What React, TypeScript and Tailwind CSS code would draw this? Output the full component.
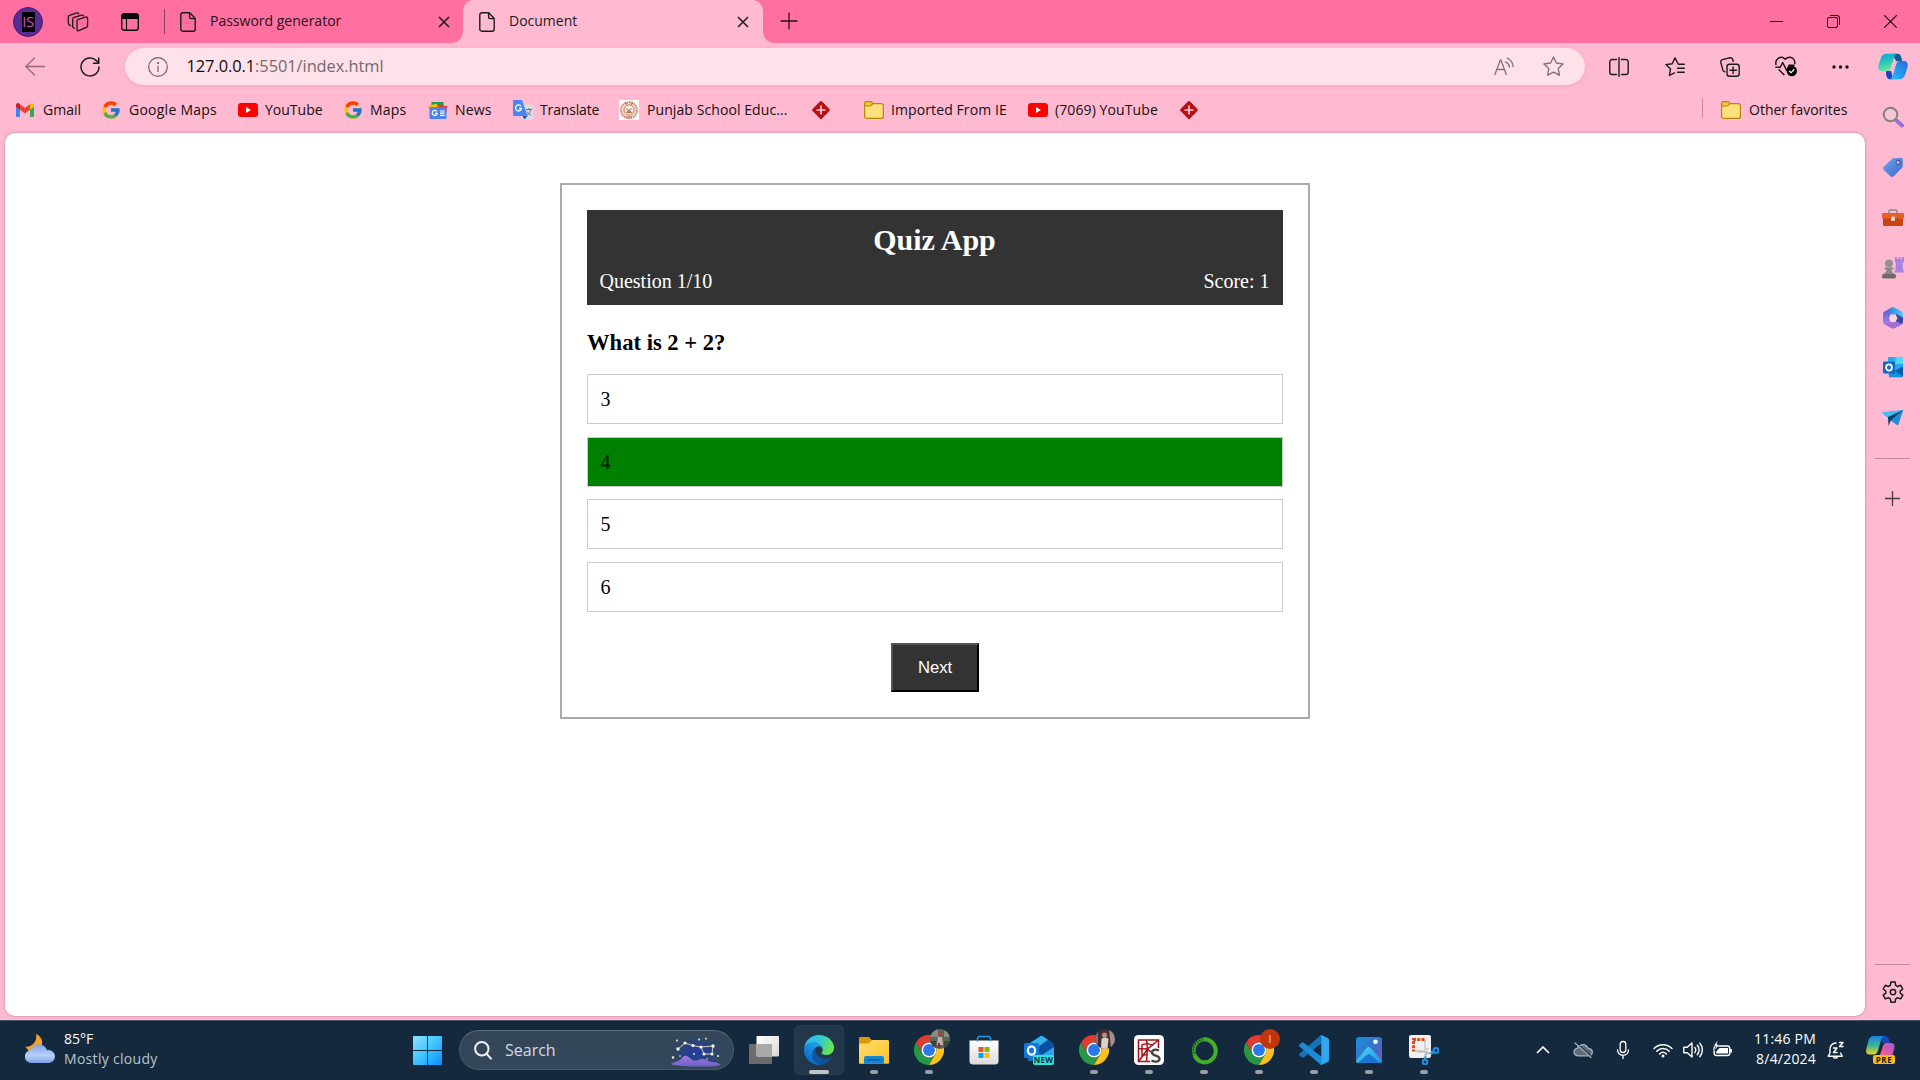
import React from 'react';
import { FcGoogle } from 'react-icons/fc';

/* ---------- shared pieces ---------- */

function Line({ className = '', children, w = 1.3 }: { className?: string; children: React.ReactNode; w?: number }) {
  return (
    <svg
      viewBox="0 0 20 20"
      className={'shrink-0 ' + className}
      fill="none"
      stroke="currentColor"
      strokeWidth={w}
      strokeLinecap="round"
      strokeLinejoin="round"
    >
      {children}
    </svg>
  );
}

const DocIcon = () => (
  <svg viewBox="0 0 16 20" className="h-5 w-4 shrink-0" fill="none" stroke="#1b1b1b" strokeWidth="1.4" strokeLinejoin="round">
    <path d="M2.8 .8h7l5.4 5.6v10.8a2 2 0 0 1-2 2H2.800a2 2 0 0 1-2-2V2.800a2 2 0 0 1 2-2z" />
    <path d="M9.600 1v4.200a1.400 1.400 0 0 0 1.400 1.400h4" />
  </svg>
);

const TabClose = () => (
  <svg viewBox="0 0 12 12" className="h-3 w-3 shrink-0" stroke="#1b1b1b" strokeWidth="1.500">
    <path d="M1 1l10 10M11 1L1 11" />
  </svg>
);

/* ---------- title bar ---------- */

function TitleBar() {
  return (
    <div className="flex h-[43px] w-full shrink-0 items-center bg-[#ff6fa0]">
      <div className="ml-[13px] flex h-[30px] w-[30px] items-center justify-center rounded-full border border-[#44206e] bg-[#5a2a96]">
        <div className="flex h-5 w-[13px] flex-col items-center justify-center bg-black text-[15px] leading-[17px] tracking-[-0.5px] text-[#d650c8]">
          IS
        </div>
      </div>
      <svg viewBox="0 0 22 20" className="ml-6 h-5 w-[22px]" fill="none" stroke="#1b1b1b" strokeWidth="1.300" strokeLinejoin="round" strokeLinecap="round">
        <path d="M11.300 7.300l7.500-2.200c1-.3 1.800.4 1.800 1.500v7c0 .8-.5 1.400-1.200 1.700l-7.600 3.400c-.9.3-1.800-.2-1.800-1.200V9.200c0-1 .4-1.600 1.300-1.900z" />
        <path d="M7.400 16.200l-1-.4c-.5-.3-.7-.8-.7-1.400V7.200c0-.9.4-1.500 1.300-1.800l7.600-2.300c.9-.2 1.600.1 2 .9" />
        <path d="M3.600 13.600l-1.300-.7c-.8-.5-1-1-1-1.800V5.200c0-.9.4-1.500 1.200-1.800L9.800.9c.9-.2 1.600 0 2 .8" />
      </svg>
      <svg viewBox="0 0 18 18" className="ml-8 h-[18px] w-[18px]" fill="none" stroke="#0b0b0b" strokeWidth="1.400">
        <rect x=".7" y=".7" width="16.600" height="16.600" rx="2.600" />
        <path d="M1 3.200A2.500 2.500 0 0 1 3.200 1h11.600A2.500 2.500 0 0 1 17 3.200v2H1z" fill="#0b0b0b" />
        <path d="M5.500 5v12" strokeWidth="1.100" />
      </svg>
      <div className="ml-[25px] h-[25px] w-px bg-[#8f3d5b]" />
      <div className="flex h-full w-[298px] items-center rounded-br-[11px] pl-[15px]">
        <DocIcon />
        <span className="ml-[14px] w-[228px] pb-[2px] text-[14px] text-[#2a0f18]">Password generator</span>
        <TabClose />
      </div>
      <div className="relative flex h-full w-[300px] items-center rounded-t-[11px] bg-[#ffbad2] pl-4">
        <div className="absolute bottom-0 -left-[11px] h-[11px] w-[11px] bg-[radial-gradient(circle_at_0_0,transparent_10.500px,#ffbad2_11px)]" />
        <div className="absolute -right-[11px] bottom-0 h-[11px] w-[11px] bg-[radial-gradient(circle_at_100%_0,transparent_10.500px,#ffbad2_11px)]" />
        <DocIcon />
        <span className="ml-[14px] w-[228px] pb-[2px] text-[14px] text-[#1b1b1b]">Document</span>
        <TabClose />
      </div>
      <svg viewBox="0 0 18 18" className="mb-px ml-[17px] h-[18px] w-[18px]" stroke="#2a0f18" strokeWidth="1.300">
        <path d="M9 .5v17M.5 9h17" />
      </svg>
      <div className="flex-1" />
      <div className="flex items-center gap-11 pr-[23px]">
        <svg viewBox="0 0 13 13" className="h-[13px] w-[13px]" stroke="#000"><path d="M0 6.500h13" /></svg>
        <svg viewBox="0 0 13 13" className="h-[13px] w-[13px]" fill="none" stroke="#000">
          <rect x=".5" y="2.500" width="10" height="10" rx="1.500" />
          <path d="M3 .5h7a2.500 2.500 0 0 1 2.500 2.500v7" />
        </svg>
        <svg viewBox="0 0 13 13" className="h-[13px] w-[13px]" stroke="#000" strokeWidth="1.100"><path d="M.3.3l12.400 12.400M12.700.3L.3 12.700" /></svg>
      </div>
    </div>
  );
}

/* ---------- address bar ---------- */

const CopilotLogo = () => (
  <svg viewBox="0 0 30 27" className="h-[27px] w-[30px] shrink-0">
    <defs>
      <linearGradient id="cpA" x1="0" y1="0" x2=".3" y2="1">
        <stop offset="0" stopColor="#14a0dc" /><stop offset=".45" stopColor="#1fc0c0" /><stop offset="1" stopColor="#6be59a" />
      </linearGradient>
      <linearGradient id="cpB" x1="1" y1="0" x2="0" y2="1">
        <stop offset="0" stopColor="#2568e0" /><stop offset="1" stopColor="#21c4f5" />
      </linearGradient>
    </defs>
    <path d="M14 .8h5.500c2.500 0 3.300 1.700 3.800 3.700l1 3.800h-6z" fill="#0d5f96" />
    <path d="M8 18h5l2.500 8.300H12c-2.500 0-3.200-2-3.800-4z" fill="#1746c8" />
    <path d="M8.500.8H19c-2 .8-2.800 3-3.500 5.500L13 14.500c-.8 2.600-2 3.700-4.500 3.700H4C.7 18.200-.3 15.500.5 12.500l2.200-7C3.700 2.300 5.500.8 8.500.8z" fill="url(#cpA)" />
    <path d="M21.500 26.300H11.800c2-.8 2.800-3 3.500-5.500l2.500-8.500c.8-2.700 2-4.200 4.500-4.200H26c3.300 0 4.300 3 3.500 6l-2.200 7.500c-1 3.200-2.800 4.700-5.800 4.700z" fill="url(#cpB)" />
  </svg>
);

function AddressBar() {
  return (
    <div className="flex h-[47px] w-full items-center text-[#1b1b1b]">
      <Line className="ml-[25px] h-5 w-5 text-[#94697a]"><path d="M.8 9.500h18.700M9.500 1L.8 9.500 9.500 18" /></Line>
      <Line className="ml-[35px] h-5 w-5" w={1.500}>
        <path d="M19 10a9 9 0 1 1-2.600-6.400L18.600 6" />
        <path d="M18.700 1v5.200h-5.200" />
      </Line>
      <div className="ml-[25px] flex h-[37px] w-[1460px] items-center rounded-full bg-[#ffe1ea] shadow-[0_1px_5px_rgba(200,80,140,0.18)]">
        <Line className="ml-[23px] h-5 w-5 text-[#6f6166]" w={1.200}>
          <circle cx="10" cy="10" r="9.300" /><path d="M10 9v5.500" /><circle cx="10" cy="6" r=".5" fill="currentColor" />
        </Line>
        <span className="ml-[18.500px] text-[16.400px] tracking-[-0.060px] text-[#75696d]"><span className="text-[#100a0c]">127.0.0.1</span>:5501/index.html</span>
        <div className="flex-1" />
        <Line className="mr-[29px] h-5 w-5 text-[#7f7276]" w={1.300}>
          <path d="M.9 17.500L6.400 3h.5l5.400 14.500M2.800 12.500h7.700M11.500 4.800c2.100.9 3.600 2.800 4 5.200M13.200 1.200c3.400 1.500 5.500 4.500 6 8.300" />
        </Line>
        <Line className="mr-[21px] h-[21px] w-[21px] text-[#7f7276]" w={1.300}>
          <path d="M10 .9l2.800 5.800 6.300.9-4.600 4.400 1.100 6.300L10 15.300l-5.600 3L5.500 12 .9 7.600l6.300-.9z" />
        </Line>
      </div>
      <Line className="ml-6 h-5 w-5" w={1.400}>
        <path d="M10 .5v19M7.500 2.500H3a2.200 2.200 0 0 0-2.200 2.200v10.600A2.200 2.200 0 0 0 3 17.500h4.500M12.500 2.500H17a2.200 2.200 0 0 1 2.200 2.200v10.600a2.200 2.200 0 0 1-2.200 2.200h-4.500" />
      </Line>
      <Line className="ml-9 h-5 w-5" w={1.400}>
        <path d="M19.300 7.200h-6L10 .9 7.200 6.700.9 7.600 5.500 12l-1.100 6.500 5-2.700M12.500 11.200h6.800M12.500 15.200h6.800" />
      </Line>
      <Line className="ml-[35px] h-5 w-5" w={1.400}>
        <rect x="7" y="7.200" width="12.200" height="12" rx="2.500" />
        <path d="M13.100 10v6.500M9.900 13.200h6.500M4.800 14.800c-1.300-.2-1.700-.8-2-2L.8 5.200c-.3-1.300.3-2.200 1.500-2.600L10 .8c1.300-.3 2.200.3 2.700 1.500l.5 2" />
      </Line>
      <svg viewBox="0 0 23 21" className="ml-[35px] h-[21px] w-[23px] shrink-0" fill="none" stroke="#111" strokeWidth="1.400" strokeLinejoin="round" strokeLinecap="round">
        <path d="M1 8.500C-.2 3.200 5.800-1.500 10.300 3.200 14.800-1.500 20.800 3.200 19.700 7.500M4 13.700l5 5" />
        <path d="M.8 11.200h4.500l2.400-4.700 4 8 2.300-5.300h5" />
        <circle cx="16.800" cy="15" r="5.200" fill="#000" stroke="none" />
        <path d="M14.600 15.200l1.600 1.500 2.800-3.200" stroke="#fff" strokeWidth="1.200" />
      </svg>
      <svg viewBox="0 0 17 4" className="ml-[34px] h-1 w-[17px]" fill="#111"><circle cx="2" cy="2" r="1.700" /><circle cx="8.500" cy="2" r="1.700" /><circle cx="15" cy="2" r="1.700" /></svg>
      <div className="ml-[29px]"><CopilotLogo /></div>
    </div>
  );
}

/* ---------- bookmarks ---------- */

const Gmail = () => (
  <svg viewBox="0 0 18 14" className="h-[14px] w-[18px] shrink-0">
    <path d="M0 2.500V13c0 .6.4 1 1 1h3V5.500z" fill="#4285f4" />
    <path d="M18 2.500V13c0 .6-.4 1-1 1h-3V5.500z" fill="#34a853" />
    <path d="M14 1.200v5.600l4-3V2c0-1.800-2-2.600-3.300-1.500z" fill="#fbbc04" />
    <path d="M4 1.200v5.600L0 3.800V2C0 .2 2-.6 3.300.5z" fill="#c5221f" />
    <path d="M4 6.800V1.200l5 3.800 5-3.800v5.600l-5 3.700z" fill="#ea4335" />
  </svg>
);
const GoogleG = () => <FcGoogle className="h-5 w-[18px] shrink-0 scale-115" />;
const YouTube = () => (
  <svg viewBox="0 0 20 14" className="h-[14px] w-5 shrink-0"><rect width="20" height="14" rx="3" fill="#f00" /><path d="M8 4v6l5-3z" fill="#fff" /></svg>
);
const News = () => (
  <svg viewBox="0 0 20 17" className="h-[17px] w-5 shrink-0">
    <path d="M3.500 0h12v6h-12z" fill="#1e9a52" />
    <path d="M10 2.500l9.500 1.800-1 6H10z" fill="#e5382c" />
    <path d="M.3 4l8.500-2.500L11 8 2 10z" fill="#fbbc04" />
    <rect x="1.500" y="5" width="17" height="12" rx="1" fill="#4c83ee" />
    <path d="M8.600 9.300a2.500 2.500 0 1 0 .6 2H7M12 9h4.500M12 11.200h4.500M12 13.400h4.500" stroke="#fff" strokeWidth="1.200" fill="none" />
  </svg>
);
const Translate = () => (
  <svg viewBox="0 0 20 20" className="h-5 w-5 shrink-0">
    <rect x="8" y="4.500" width="12" height="15" rx="1" fill="#d9dbe0" />
    <path d="M9.500 16h5l-3 3.600z" fill="#2551b5" />
    <path d="M1 0h8l5.500 16H1.200C.4 16 0 15.500 0 14.800V1.200C0 .5.4 0 1 0z" fill="#4a86f0" />
    <path d="M8 6.200a3 3 0 1 0 .5 2.300H6" stroke="#fff" strokeWidth="1.300" fill="none" />
    <path d="M13 9.500h6M16 8v1.500M17.800 9.500c-.5 2.500-2 4.500-4 5.800M14 11.500c.8 1.700 2.300 3 4 3.900" stroke="#66757f" strokeWidth="1" fill="none" />
  </svg>
);
const Crest = () => (
  <svg viewBox="0 0 20 20" className="h-5 w-5 shrink-0">
    <rect width="20" height="20" fill="#fffdfb" />
    <circle cx="10" cy="10.200" r="8.200" fill="#f0d3c4" stroke="#c98d74" strokeWidth="1.800" strokeDasharray="1.600 .8" />
    <circle cx="10" cy="10" r="5" fill="#fbeee7" stroke="#c9866b" strokeWidth="1" />
    <path d="M7.500 8.500l1 1M12.500 8.500l-1 1M8 12.500l2-2.500 2 2.500zM6 2.500l2 2M14 2.500l-2 2M7 17h6" stroke="#b56a4d" strokeWidth="1.200" fill="#d08c70" />
  </svg>
);
const Diamond = () => (
  <svg viewBox="0 0 20 20" className="h-5 w-5 shrink-0">
    <rect x="3.300" y="3.300" width="13.400" height="13.400" rx="1.500" transform="rotate(45 10 10)" fill="#b90e12" />
    <path d="M10 5.500v9M5.500 10h9" stroke="#f7ccd3" strokeWidth="1.700" />
  </svg>
);
const Folder = () => (
  <svg viewBox="0 0 20 18" className="h-[18px] w-5 shrink-0" stroke="#b8860b" strokeWidth="1.200">
    <path d="M2.600 2.700h14.800a2 2 0 0 1 2 2v10.700a2 2 0 0 1-2 2H2.600a2 2 0 0 1-2-2V3z" fill="#ffe07d" />
    <path d="M.6 5V2.400A1.800 1.800 0 0 1 2.400.6h4c.7 0 1.200.3 1.600.8l.8 1.300-1.300 1.400c-.5.5-1 .9-1.700.9z" fill="#f5c63a" />
  </svg>
);

function Bookmarks() {
  const items = [
    { icon: <Gmail />, label: 'Gmail', cls: 'w-[86px] gap-[9px]' },
    { icon: <GoogleG />, label: 'Google Maps', cls: 'w-[136px] gap-[9px] tracking-[0.250px]' },
    { icon: <YouTube />, label: 'YouTube', cls: 'w-[106px] gap-[7px]' },
    { icon: <GoogleG />, label: 'Maps', cls: 'w-[84px] gap-[8px] tracking-[0.200px]' },
    { icon: <News />, label: 'News', cls: 'w-[85px] gap-[7px] tracking-[0.200px]' },
    { icon: <Translate />, label: 'Translate', cls: 'w-[106px] gap-[7px] tracking-[-0.150px]' },
    { icon: <Crest />, label: 'Punjab School Educ...', cls: 'w-[192px] gap-[8px] tracking-[0.080px]' },
    { icon: <Diamond />, label: '', cls: 'w-[53px]' },
    { icon: <Folder />, label: 'Imported From IE', cls: 'w-[164px] gap-[7px] tracking-[0.100px]' },
    { icon: <YouTube />, label: '(7069) YouTube', cls: 'w-[151px] gap-[7px] tracking-[0.100px]' },
    { icon: <Diamond />, label: '', cls: 'w-[53px]' },
  ];
  return (
    <div className="flex h-[43px] w-full items-center pb-[3px] pl-4 text-[14px] text-[#160d10]">
      {items.map((b, i) => (
        <div key={i} className={'flex shrink-0 items-center whitespace-nowrap ' + b.cls}>
          {b.icon}
          {b.label && <span className="-mt-[2px]">{b.label}</span>}
        </div>
      ))}
      <div className="flex-1" />
      <div className="mt-2 mr-[18px] h-5 w-px self-start bg-[#c48a9e]" />
      <div className="mr-[18px] flex w-[126px] items-center gap-2 whitespace-nowrap"><Folder /><span className="-mt-[2px]">Other favorites</span></div>
    </div>
  );
}

/* ---------- sidebar ---------- */

const side = 'h-[22px] w-[22px] shrink-0';

function Sidebar() {
  return (
    <div className="flex w-[55px] shrink-0 flex-col items-center">
      <div className="flex flex-col gap-[28.200px] pt-4">
        <svg viewBox="0 0 22 22" className={side}>
          <path d="M14.500 14.500l5.500 5" stroke="#9a6fd8" strokeWidth="4" strokeLinecap="round" />
          <circle cx="8.500" cy="8.500" r="6.800" fill="#f7c6d6" stroke="#858080" strokeWidth="2" />
        </svg>
        <svg viewBox="0 0 22 22" className={side}>
          <defs><linearGradient id="tg" x1="0" y1="0" x2="1" y2="1"><stop stopColor="#6ea4ee" /><stop offset="1" stopColor="#3c68cc" /></linearGradient></defs>
          <path d="M12 2.300l7-.6c1 0 1.800.7 1.800 1.800v6.500c0 .8-.3 1.300-.8 1.800l-8.200 8.500c-1 1-2.300 1-3.300 0L1.800 14.100c-1-1-1-2.400 0-3.400l8-7.500c.7-.6 1.300-.9 2.200-.9z" fill="url(#tg)" />
          <circle cx="16" cy="6.500" r="2" fill="#f5b3cc" stroke="#304b96" />
        </svg>
        <svg viewBox="0 0 22 22" className={side}>
          <path d="M7 7V5.500A1.500 1.500 0 0 1 8.500 4h5A1.500 1.500 0 0 1 15 5.500V7" stroke="#888" strokeWidth="1.400" fill="none" />
          <rect x="1" y="11" width="20" height="9" rx="1.500" fill="#c8430f" />
          <rect x="0" y="7" width="22" height="5.500" rx="1.300" fill="#e4602a" />
          <rect x="9" y="10.500" width="4" height="4.500" rx="1.500" fill="#ddd" />
        </svg>
        <svg viewBox="0 0 22 22" className={side}>
          <path d="M13 0h2v2h1.500V0h2v2H20V0h2v5l-1.500 1 .7 7 1 2.500H12l1.300-2.500.7-7-1-1z" fill="#a884e0" />
          <circle cx="7" cy="6.500" r="4" fill="#929292" />
          <path d="M2.500 10.500h9v2h-2c0 2 1 3.300 3 4.500H1.500c2-1.200 3-2.500 3-4.500h-2z" fill="#888" />
          <rect x="0" y="17" width="14" height="4.500" rx="1.800" fill="#6c6c6c" />
        </svg>
        <svg viewBox="0 0 22 22" className={side}>
          <defs>
            <linearGradient id="mA" x1="0" y1="0" x2="0" y2="1"><stop stopColor="#4b5fd0" /><stop offset="1" stopColor="#a77ee8" /></linearGradient>
            <linearGradient id="mB" x1="0" y1="0" x2="1" y2="0"><stop stopColor="#2f8fe0" /><stop offset="1" stopColor="#55c4f4" /></linearGradient>
          </defs>
          <path d="M11 0L2.500 4.500C1.300 5.200 1 6 1 7.200v7.500c0 1.300.5 2 1.500 2.600L8 14.500V8z" fill="url(#mA)" />
          <path d="M9 .8c1.200-.8 2.800-.8 4 0L20 4.800c.8.5 1 1.200 1 2.200v5L8 7c0-3 0-5 1-6.200z" fill="url(#mB)" />
          <path d="M14 7l7 3.500v4.300c0 1.200-.4 2-1.300 2.500L16 19.500l-2-5.500z" fill="#39479d" />
          <path d="M2.500 17.300l5.500-3 6.500.2 5.700 2.300-7 4.200c-1.300.8-3 .8-4.300 0z" fill="#a06fd0" />
          <path d="M9 7.500h4.500l2 3.700-2.200 3.800H8.800l-2-3.700z" fill="#ffd3df" />
        </svg>
        <svg viewBox="0 0 22 22" className={side}>
          <rect x="6" y="0" width="15" height="14" rx="1" fill="#28a8ea" />
          <path d="M13.500 0H20a1 1 0 0 1 1 1v6h-7.500z" fill="#50d9ff" />
          <path d="M6 10l7.500 3L21 9.500V19a1.300 1.300 0 0 1-1.300 1.300H7z" fill="#1490df" />
          <path d="M21 9.500v10L13 14z" fill="#0a5cad" />
          <rect x="1" y="4.500" width="12" height="12" rx="1.200" fill="#0f6cc4" />
          <ellipse cx="7" cy="10.500" rx="2.900" ry="3.200" fill="none" stroke="#fff" strokeWidth="1.800" />
        </svg>
        <svg viewBox="0 0 22 22" className={side}>
          <path d="M0 5.500L21.300 3 16 18.500l-6-4z" fill="#1d90d8" />
          <path d="M0 5.500L21.300 3 6 10z" fill="#45c0f2" />
          <path d="M6 10L21.300 3 9 13l-2.500 6z" fill="#0b3d6c" />
        </svg>
      </div>
      <div className="mt-[29px] h-px w-[35px] bg-[#c48a9e]" />
      <svg viewBox="0 0 15 15" className="mt-8 h-[15px] w-[15px]" stroke="#4b3a40" strokeWidth="1.300"><path d="M7.500 0v15M0 7.500h15" /></svg>
      <div className="flex-1" />
      <div className="h-px w-[35px] bg-[#c48a9e]" />
      <svg viewBox="0 0 24 24" className="mt-[15px] mb-[16px] h-6 w-6" fill="none" stroke="#1b1b1b" strokeWidth="1.500" strokeLinejoin="round">
        <path d="M9.900 2h4.200l.6 3.400 1.900 1.100 3.100-1.200 2.100 3.700-2.600 2.100v2l2.600 2.100-2.100 3.700-3.100-1.200-1.900 1.100-.6 3.400H9.900l-.6-3.400-1.900-1.100-3.100 1.200-2.100-3.700 2.600-2.100v-2L2.200 9l2.100-3.700 3.100 1.200 1.900-1.100z" />
        <circle cx="12" cy="12.100" r="2.700" />
      </svg>
    </div>
  );
}

/* ---------- quiz page ---------- */

function Quiz() {
  const options = ['3', '4', '5', '6'];
  const [picked, setPicked] = React.useState('4');
  return (
    <div className="mx-auto mt-[50px] h-[536px] w-[750px] border-2 border-[#a9a9a9] p-[25px] font-['Liberation_Serif',serif] text-[20px] leading-[23px] text-black">
      <div className="h-[95px] bg-[#333] pt-[13px] pr-[13.500px] pl-[12.500px] text-white">
        <h1 className="text-center text-[30px] leading-[34px] font-bold">Quiz App</h1>
        <div className="mt-[13px] flex justify-between">
          <span>Question 1/10</span>
          <span>Score: 1</span>
        </div>
      </div>
      <h3 className="mt-[24px] text-[22.600px] leading-[27px] font-bold">What is 2 + 2?</h3>
      <ul className="mt-[18px] flex flex-col gap-[12.660px]">
        {options.map((o) => (
          <li
            key={o}
            onClick={() => setPicked(o)}
            className={'flex h-[50px] cursor-pointer items-center border border-[#ccc] px-[12.500px] pt-px ' + (o === picked ? 'bg-[#008000]' : 'bg-white')}
          >
            {o}
          </li>
        ))}
      </ul>
      <div className="mt-[31px] flex justify-center">
        <button className="h-[49px] w-[88px] border-2 border-t-[#555] border-r-black border-b-black border-l-[#555] bg-[#333] font-['Liberation_Sans',sans-serif] text-[16.670px] text-white">
          Next
        </button>
      </div>
    </div>
  );
}

/* ---------- taskbar ---------- */

const app = 'h-[30px] w-[30px]';

const Edge = () => (
  <svg viewBox="0 0 256 256" className={app}>
    <defs>
      <linearGradient id="eA" x1=".2" y1=".7" x2="1" y2=".7"><stop stopColor="#0c59a4" /><stop offset="1" stopColor="#114a8b" /></linearGradient>
      <linearGradient id="eB" x1=".6" y1=".2" x2=".2" y2="1"><stop stopColor="#1b9de2" /><stop offset=".4" stopColor="#1383d8" /><stop offset="1" stopColor="#0a62c0" /></linearGradient>
      <linearGradient id="eC" x1="0" y1=".3" x2="1" y2=".6"><stop stopColor="#35b8f0" /><stop offset=".45" stopColor="#2fc8d8" /><stop offset="1" stopColor="#6ae83e" /></linearGradient>
    </defs>
    <path fill="url(#eA)" d="M231 190.500c-3.400 1.800-6.900 3.400-10.500 4.700a101.500 101.500 0 0 1-35.900 6.400c-47.300 0-88.500-32.500-88.500-74.300.1-11.400 6.400-21.900 16.400-27.300-42.800 1.800-53.800 46.400-53.800 72.500 0 74 68.100 81.400 82.800 81.400 7.900 0 19.800-2.300 27-4.600l1.300-.4a128.300 128.300 0 0 0 66.600-52.800 4 4 0 0 0-5.400-5.600z" />
    <path fill="url(#eB)" d="M105.700 241.400c-8.900-5.500-16.600-12.800-22.700-21.300a80.700 80.700 0 0 1 29.500-120.200c3.100-1.500 8.500-4.100 15.600-4 10.100.1 19.600 4.900 25.700 13 4 5.400 6.300 11.900 6.400 18.700 0-.2 24.500-79.600-80-79.600-43.900 0-80 41.700-80 78.200-.2 19.300 4 38.500 12.100 56a128 128 0 0 0 156.400 67.100 75.600 75.600 0 0 1-62.900-7.900z" />
    <path fill="url(#eC)" d="M152.300 148.900c-.9 1-3.400 2.500-3.400 5.600 0 2.600 1.700 5.200 4.800 7.300 14.400 10.100 41.700 8.700 41.800 8.700 10.700 0 21.200-2.900 30.400-8.300a61.800 61.800 0 0 0 30.400-53.100c.3-22.400-8-37.300-11.300-43.900C223.800 23.900 177.700 0 127.600 0 57.300 0 .1 56.300-.4 126.700c.5-36.500 36.800-66 80.300-66 3.500 0 23.600.3 42.300 10.100 16.500 8.600 25.100 19 31.100 29.300 6.200 10.700 7.300 24.100 7.300 29.500 0 5.300-2.700 13.300-7.800 19.900z" />
  </svg>
);

const Explorer = () => (
  <svg viewBox="0 0 30 30" className={app}>
    <defs><linearGradient id="xf" x1="0" y1="0" x2="1" y2="1"><stop stopColor="#ffdd6b" /><stop offset="1" stopColor="#fbc02b" /></linearGradient></defs>
    <path d="M1.500 2H10l3 3.500V12H0V3.500C0 2.500.5 2 1.500 2z" fill="#dc9a08" />
    <path d="M0 8.500h9.500L13 5h15.500c1 0 1.500.5 1.500 1.500v21c0 .8-.5 1.300-1.300 1.300H1.300C.5 28.800 0 28.300 0 27.500z" fill="url(#xf)" />
    <path d="M5 28.800V23a2 2 0 0 1 2-2h16a2 2 0 0 1 2 2v5.800z" fill="#1485d2" />
    <path d="M9 24.800h12" stroke="#0b559c" strokeWidth="1.500" strokeLinecap="round" />
  </svg>
);

function Chrome({ badge }: { badge: 'a' | 'b' | 'c' }) {
  return (
    <div className="relative">
      <svg viewBox="0 0 48 48" className={app}>
        <path d="M24 12h20.800A24 24 0 0 0 3.200 12l10.400 18A12 12 0 0 1 24 12z" fill="#e33b2e" />
        <path d="M13.600 30L3.200 12A24 24 0 0 0 24 48l10.400-18a12 12 0 0 1-20.800 0z" fill="#279847" />
        <path d="M34.400 30L24 48a24 24 0 0 0 20.800-36H24a12 12 0 0 1 10.400 18z" fill="#fcc21b" />
        <circle cx="24" cy="24" r="12" fill="#fff" />
        <circle cx="24" cy="24" r="9.500" fill="#2b78ec" />
      </svg>
      <div className="absolute -top-[6px] left-4 h-5 w-5 overflow-hidden rounded-full">
        {badge === 'a' && (
          <svg viewBox="0 0 20 20"><rect width="20" height="20" fill="#5d6459" /><path d="M0 0h8v8H0zM14 2h6v6h-6z" fill="#87907f" /><path d="M0 12h6v8H0zM14 12h6v8h-6z" fill="#40463d" /><circle cx="10" cy="5" r="1.800" fill="#c2342f" /><path d="M8 8h4l1 8H7z" fill="#c9b3b0" /><path d="M8 14h2v5H8z" fill="#8c2a2e" /></svg>
        )}
        {badge === 'b' && (
          <svg viewBox="0 0 20 20"><rect width="20" height="20" fill="#403234" /><path d="M14 0h6v20h-4z" fill="#a98b8d" /><path d="M0 3h3v12H0z" fill="#8a6e70" /><circle cx="9.500" cy="6" r="2.600" fill="#b58c79" /><path d="M6.500 10c2-2 5-2 7 0l-1 10H6z" fill="#dcd0c8" /></svg>
        )}
        {badge === 'c' && <div className="flex h-full w-full items-center justify-center bg-[#bf360c] text-[10px] text-[#ffd9cc]">I</div>}
      </div>
    </div>
  );
}

const Store = () => (
  <svg viewBox="0 0 30 30" className={app}>
    <defs><linearGradient id="st" x1="0" y1="0" x2="0" y2="1"><stop stopColor="#fff" /><stop offset="1" stopColor="#dcdcdc" /></linearGradient></defs>
    <path d="M.5 5.500h29V26a3.500 3.500 0 0 1-3.500 3.500H4A3.500 3.500 0 0 1 .5 26z" fill="url(#st)" />
    <path d="M8.500 6.500v-3c0-1.300.8-2 2-2h9c1.200 0 2 .7 2 2v3" fill="none" stroke="#1b9be6" strokeWidth="1.500" />
    <path d="M9.500 12h5v5h-5z" fill="#f25022" /><path d="M15.500 12h5v5h-5z" fill="#7fba00" />
    <path d="M9.500 18h5v5h-5z" fill="#00a4ef" /><path d="M15.500 18h5v5h-5z" fill="#ffb900" />
  </svg>
);

const OutlookNew = () => (
  <div className="relative">
    <svg viewBox="0 0 30 30" className={app}>
      <path d="M4 9L16 1.500c1-.6 2-.6 3 0L30 9v14a3 3 0 0 1-3 3H4z" fill="#1271c7" />
      <path d="M5 9L16 1.500c1-.6 2-.6 3 0L24 5 12 13z" fill="#32b4ee" />
      <path d="M24 5l6 4v3L18 20l-6-6z" fill="#0b4f9f" />
      <path d="M18 20l12-8v12H14z" fill="#2aa6ee" />
      <rect x="0" y="8" width="15" height="15" rx="1.500" fill="#1079d6" />
      <ellipse cx="7.500" cy="15.500" rx="3.600" ry="4.200" fill="none" stroke="#fff" strokeWidth="2.200" />
    </svg>
    <div className="absolute top-[20px] left-[9px] flex h-[10px] w-[21px] items-center justify-center rounded-[2px] bg-[#2fe3dc] text-[8px] leading-none font-bold tracking-[0.300px] text-[#0b2a38]">NEW</div>
  </div>
);

const Spyder = () => (
  <svg viewBox="0 0 30 30" className={app}>
    <rect width="30" height="30" rx="4.500" fill="#fafafa" />
    <g fill="none" stroke="#a3161e" strokeWidth="1.500">
      <path d="M24.500 13V5h-20v21.500H16M4.500 13.500l9 .5 11-9M13.500 14L5 26M13.500 14l3.500 3M12.500 5l1 9M13.500 14l-1 12.500" />
      <path d="M8 9.500c2 .3 3.500 0 5.200-1.500 1.800 1.500 3.800 2 6.300 1.500M8 9.500c-.3 4-.3 7.500.2 11.500 1.700-1.200 3.200-1.500 5-1" />
    </g>
    <path d="M25 15.500c-3-1.500-7-1-7 2 0 4 7.500 2.300 7.500 6.300 0 3.200-5 3.500-8 1.700" fill="none" stroke="#444" strokeWidth="2.300" />
  </svg>
);

const Anaconda = () => (
  <svg viewBox="0 0 30 30" className={app}>
    <path d="M14 4.500A11 11.500 0 1 1 5.500 20" fill="none" stroke="#43b02a" strokeWidth="4" />
    <path d="M5.500 20A11 11.500 0 0 1 15 4.500" fill="none" stroke="#3a9d27" strokeWidth="3.600" />
    <path d="M4.500 18A11 11.500 0 0 1 13.500 4.500" fill="none" stroke="#14293d" strokeWidth="1.300" strokeDasharray="1.300 1.600" />
  </svg>
);

const VSCode = () => (
  <svg viewBox="0 0 30 30" className={app}>
    <path d="M22 0l6.500 3c1 .5 1.500 1.200 1.500 2.300v4L22 8.500 4.500 22.500c-.6.4-1.300.4-1.800 0L.5 20.400c-.6-.6-.6-1.400 0-2z" fill="#1273b8" />
    <path d="M22 30l6.500-3c1-.5 1.500-1.200 1.500-2.300v-4L22 21.500 4.500 7.500c-.6-.4-1.300-.4-1.800 0L.5 9.600c-.6.6-.6 1.400 0 2z" fill="#1b8bd6" />
    <path d="M22 0l6.500 3c1 .5 1.500 1.200 1.500 2.300v19.400c0 1.100-.5 1.800-1.500 2.300L22 30c-.8 0 .3-.5.3-1.600V1.600C22.300.5 21.200 0 22 0z" fill="#2fa8f2" />
  </svg>
);

const Photos = () => (
  <svg viewBox="0 0 30 30" className={app}>
    <defs>
      <linearGradient id="ph" x1="0" y1="0" x2="1" y2="1"><stop stopColor="#1593dd" /><stop offset=".6" stopColor="#3f6cc4" /><stop offset="1" stopColor="#7c56c0" /></linearGradient>
      <linearGradient id="pm" x1="0" y1="0" x2="1" y2="1"><stop stopColor="#4fd6fa" /><stop offset="1" stopColor="#2190e0" /></linearGradient>
    </defs>
    <rect x="2" y="2" width="26" height="26" rx="3" fill="url(#ph)" />
    <path d="M2 26L12.500 13c1.200-1.500 3-1.500 4.200 0L28 26c0 1.200-1 2-2.200 2H4.200C3 28 2 27.200 2 26z" fill="url(#pm)" />
    <path d="M4 28l9-8c1.200-1 2.700-1 3.900 0l8.500 8z" fill="#1a74d0" />
    <circle cx="21.500" cy="6.800" r="2.400" fill="#f2f5fb" />
  </svg>
);

const Snip = () => (
  <svg viewBox="0 0 30 30" className={app}>
    <rect x="0" y="0" width="22" height="23" rx="2" fill="#f0f0f0" />
    <path d="M16 4.500v9.500h4M5 16h8" stroke="#cfcfcf" strokeWidth="2" fill="none" />
    <path d="M15.500 4.500H4.500V16.500" fill="none" stroke="#dd4a1c" strokeWidth="3" strokeDasharray="3 1.200" />
    <path d="M8 16.500h9l1.500 2 6-1.500M17 17l-1 8" stroke="#b9bec4" strokeWidth="2.200" fill="none" />
    <circle cx="27" cy="15.500" r="2.500" fill="none" stroke="#1b93e0" strokeWidth="2" />
    <circle cx="16" cy="27" r="2.300" fill="none" stroke="#1b93e0" strokeWidth="2" />
    <path d="M21.500 19l3.500-1.700M16.500 21.500v3" stroke="#1b93e0" strokeWidth="2.200" />
  </svg>
);

const TaskView = () => (
  <svg viewBox="0 0 30 30" className={app}>
    <defs><linearGradient id="tv" x1="0" y1="0" x2="1" y2="1"><stop stopColor="#fff" /><stop offset="1" stopColor="#d8d8d8" /></linearGradient></defs>
    <rect x="0" y="9" width="23" height="20" rx="1" fill="#6c6c6c" />
    <rect x="7.500" y="1" width="22.500" height="20.500" rx="1" fill="url(#tv)" />
    <rect x="7.500" y="9" width="15.500" height="12.500" fill="#a9a9a9" />
  </svg>
);

const Constellation = () => (
  <svg viewBox="0 0 52 30" className="h-[30px] w-[52px]">
    <defs>
      <radialGradient id="sky"><stop offset=".3" stopColor="#243f98" /><stop offset="1" stopColor="#243f98" stopOpacity="0" /></radialGradient>
      <linearGradient id="hill" x1="0" y1="0" x2="0" y2="1"><stop stopColor="#a67be0" /><stop offset="1" stopColor="#6a5fc8" /></linearGradient>
    </defs>
    <ellipse cx="27" cy="15" rx="25" ry="15" fill="url(#sky)" />
    <path d="M1 27c4-3 7-1.500 10-5 3-3.500 5-4.500 8-1.500s6 4 9 2.500 6-1.500 9 .5 11 1 14 4.500c-4 2.300-46 2.300-50-1z" fill="url(#hill)" />
    <path d="M8 12l7-6 8 2.500 8 1.500 12-1-1 8h-8l-3-7" fill="none" stroke="#ded9c8" strokeWidth=".9" />
    <g fill="#fff3c9">
      <circle cx="8" cy="12" r="1.700" /><circle cx="15" cy="6" r="1.600" /><circle cx="23" cy="8.500" r="1.600" /><circle cx="31" cy="10" r="1.600" />
      <circle cx="43" cy="9" r="1.700" /><circle cx="42" cy="17" r="1.600" /><circle cx="34" cy="17" r="1.600" />
      <circle cx="7" cy="3.500" r=".9" /><circle cx="29" cy="2.500" r=".9" /><circle cx="36" cy="1.700" r=".9" /><circle cx="3" cy="20.500" r="1.200" /><circle cx="48" cy="19" r="1" /><circle cx="24" cy="17" r=".9" /><circle cx="10" cy="19" r=".8" /><circle cx="37" cy="22" r=".8" />
    </g>
  </svg>
);

function TaskApp({ children, state = 'none' }: { children: React.ReactNode; state?: 'none' | 'open' | 'active' }) {
  return (
    <div className={'relative flex h-[50px] w-[50px] shrink-0 items-center justify-center rounded-[5px] ' + (state === 'active' ? 'border border-[#2b3e50] bg-[#23374a]' : '')}>
      {children}
      {state === 'open' && <div className="absolute bottom-[1px] left-[21px] h-1 w-2 rounded-full bg-[#97a0aa]" />}
      {state === 'active' && <div className="absolute bottom-0 left-[14px] h-1 w-5 rounded-full bg-[#c3c5c5]" />}
    </div>
  );
}

function Taskbar() {
  return (
    <div className="flex h-[60px] w-full shrink-0 items-center bg-[#14293d] text-[14px] text-white shadow-[inset_0_1px_0_#46525f]">
      <svg viewBox="0 0 30 30" className="mb-[2px] ml-[25px] h-[30px] w-[30px]">
        <defs><linearGradient id="cl" x1="0" y1="0" x2="0" y2="1"><stop stopColor="#7ea3ee" /><stop offset=".6" stopColor="#b9d1f8" /><stop offset="1" stopColor="#7c9ee6" /></linearGradient></defs>
        <path d="M11 0c4.500 2 7 6 6 11l-4 6H4l-4-4.500c5 1.500 13-4 11-12.500z" fill="#f2a425" />
        <path d="M6.500 29a6.500 6.500 0 0 1-.3-13C7.500 12.500 10.500 10.500 14 10.500c4 0 6.800 2.300 7.800 5.500H23.500a6.500 6.500 0 0 1 0 13z" fill="url(#cl)" />
      </svg>
      <div className="mb-[2px] ml-[9px] w-[349px] leading-5">
        <div>85°F</div>
        <div className="tracking-[0.300px] text-[#bcc4cc]">Mostly cloudy</div>
      </div>
      <svg viewBox="0 0 29 29" className="h-[29px] w-[29px]">
        <defs><linearGradient id="wn" gradientUnits="userSpaceOnUse" x1="0" y1="0" x2="29" y2="29"><stop stopColor="#8fe3ff" /><stop offset=".5" stopColor="#3fc4fd" /><stop offset="1" stopColor="#0a8cff" /></linearGradient></defs>
        <path d="M0 1a1 1 0 0 1 1-1h13v14H0zM15 0h13a1 1 0 0 1 1 1v13H15zM0 15h14v14H1a1 1 0 0 1-1-1zM15 15h14v13a1 1 0 0 1-1 1H15z" fill="url(#wn)" />
      </svg>
      <div className="ml-[17px] flex h-10 w-[275px] items-center rounded-full border border-[#495868] border-t-[#5c6a78] bg-[#34475a]">
        <svg viewBox="0 0 18 19" className="ml-[14px] h-[19px] w-[18px]" fill="none" stroke="#eef1f4" strokeWidth="2" strokeLinecap="round"><circle cx="7.800" cy="7.800" r="6.700" /><path d="M12.800 13l4.200 4.600" /></svg>
        <span className="ml-[13px] flex-1 text-[16px] text-[#d5dae0]">Search</span>
        <div className="mt-[3px] mr-[11px]"><Constellation /></div>
      </div>
      <div className="ml-[5px] flex gap-[5px]">
        <TaskApp><TaskView /></TaskApp>
        <TaskApp state="active"><Edge /></TaskApp>
        <TaskApp state="open"><Explorer /></TaskApp>
        <TaskApp state="open"><Chrome badge="a" /></TaskApp>
        <TaskApp><Store /></TaskApp>
        <TaskApp><OutlookNew /></TaskApp>
        <TaskApp state="open"><Chrome badge="b" /></TaskApp>
        <TaskApp state="open"><Spyder /></TaskApp>
        <TaskApp state="open"><Anaconda /></TaskApp>
        <TaskApp state="open"><Chrome badge="c" /></TaskApp>
        <TaskApp state="open"><VSCode /></TaskApp>
        <TaskApp state="open"><Photos /></TaskApp>
        <TaskApp state="open"><Snip /></TaskApp>
      </div>
      <div className="flex-1" />
      <Line className="mr-5 h-5 w-5" w={1.700}><path d="M4.500 12.500L10 7l5.500 5.500" /></Line>
      <Line className="mr-5 h-5 w-5 text-[#a9b3bd]" w={1.300}>
        <path d="M7 5.500c3-2 7-.5 8 2.800 2.500.1 4.300 1.700 4.300 4 0 1-.5 2-1.200 2.600M15 15.800H5.200c-2.400 0-4.200-1.600-4.200-3.700s1.500-3.500 3.500-3.700c.1-.7.4-1.300.7-1.800" fill="#5d6b79" />
        <path d="M2 3l16 14.500" />
      </Line>
      <Line className="mr-5 h-5 w-5" w={1.300}>
        <rect x="7.200" y="1.500" width="5.600" height="11" rx="2.800" /><path d="M4.500 10c0 3 2.300 5.300 5.500 5.300s5.500-2.300 5.500-5.300M10 15.500v3" />
      </Line>
      <svg viewBox="0 0 20 16" className="mr-[10px] h-4 w-5" fill="none" stroke="#fff" strokeWidth="1.500" strokeLinecap="round">
        <path d="M1 6.500c5-5 13-5 18 0M3.800 9.200c3.500-3.500 8.900-3.500 12.400 0M6.600 12c2-2 4.800-2 6.800 0" /><circle cx="10" cy="14" r="1.500" fill="#fff" stroke="none" />
      </svg>
      <Line className="mr-[10px] h-5 w-5" w={1.400}>
        <path d="M.8 7.300h3.400L9 3v14l-4.800-4.300H.8zM11.800 7.500c1.200 1.500 1.200 3.500 0 5M14.300 5.300c2.400 2.700 2.400 6.700 0 9.400M16.800 3.200c3.400 3.900 3.400 9.700 0 13.600" />
      </Line>
      <svg viewBox="0 0 20 18" className="mr-[10px] mb-[3px] h-[18px] w-5">
        <rect x="1.200" y="6" width="15.500" height="9.500" rx="2.300" fill="none" stroke="#fff" strokeWidth="1.500" />
        <path d="M6.500 8h8.500v5.500H3.200v-2z" fill="#fff" /><path d="M18 9v3.500" stroke="#fff" strokeWidth="2" />
        <path d="M4.500 0L.5 6h2.200L1.500 10.500 6.500 4.500H4z" fill="#fff" stroke="#14293d" strokeWidth=".6" />
      </svg>
      <div className="mb-[2px] w-[73px] text-right leading-5 tracking-[0.200px] whitespace-nowrap">
        <div>11:46 PM</div>
        <div>8/4/2024</div>
      </div>
      <svg viewBox="0 0 18 19" className="ml-[11px] h-[19px] w-[18px]" fill="none" stroke="#fff" strokeWidth="1.400" strokeLinejoin="round" strokeLinecap="round">
        <path d="M9 2C5.500 2 3 4.700 3 8v4l-1.800 3.200h14L13.500 12M6.500 15.500c.5 2.200 3.500 2.200 4 0" />
        <path d="M6.500 7h3.500l-3.500 4.500H10M12.500 1.500H16l-3.500 4H16" />
      </svg>
      <div className="relative mr-[24px] ml-[21px] h-7 w-[30px]">
        <svg viewBox="0 0 30 28" className="h-7 w-[30px]">
          <defs>
            <linearGradient id="pA" x1="0" y1="0" x2="0" y2="1"><stop stopColor="#1c7fe6" /><stop offset=".5" stopColor="#36b3a0" /><stop offset="1" stopColor="#f2d418" /></linearGradient>
            <linearGradient id="pB" x1="1" y1="0" x2="0" y2="1"><stop stopColor="#a259e6" /><stop offset=".6" stopColor="#ee5a92" /><stop offset="1" stopColor="#f59a5c" /></linearGradient>
          </defs>
          <path d="M14 0h5c2.500 0 3.500 2 4 4l.8 3H17z" fill="#1a46b8" />
          <path d="M8 0h10c-2 1-2.700 3-3.400 5.500L12 14.500c-.8 2.700-2 4-4.500 4H3.500C.5 18.500-.5 16 .3 13L2.300 5C3.200 1.700 5 0 8 0z" fill="url(#pA)" />
          <path d="M20.500 7H25c3 0 4 2.500 3.200 5.500l-2 7.500c-1 3.200-2.700 5-5.700 5H12l4.500-13.500C17.300 8.500 18 7 20.500 7z" fill="url(#pB)" />
        </svg>
        <div className="absolute top-[19px] left-[7px] flex h-[9px] w-[22px] items-center justify-center rounded-[2px] bg-[#f8bd17] text-[8px] leading-none font-bold tracking-[0.600px] text-[#1b1b1b]">PRE</div>
      </div>
    </div>
  );
}

/* ---------- window ---------- */

export default function App() {
  return (
    <div className="flex h-[1080px] w-[1920px] flex-col overflow-hidden bg-[#ffbad2] font-['Open_Sans',sans-serif]">
      <TitleBar />
      <AddressBar />
      <div className="flex min-h-0 flex-1">
        <div className="flex w-[1865px] shrink-0 flex-col">
          <Bookmarks />
          <div className="mb-1 ml-[5px] flex-1 rounded-[10px] bg-white shadow-[0_0_3px_rgba(120,40,70,0.45)]">
            <Quiz />
          </div>
        </div>
        <Sidebar />
      </div>
      <Taskbar />
    </div>
  );
}
